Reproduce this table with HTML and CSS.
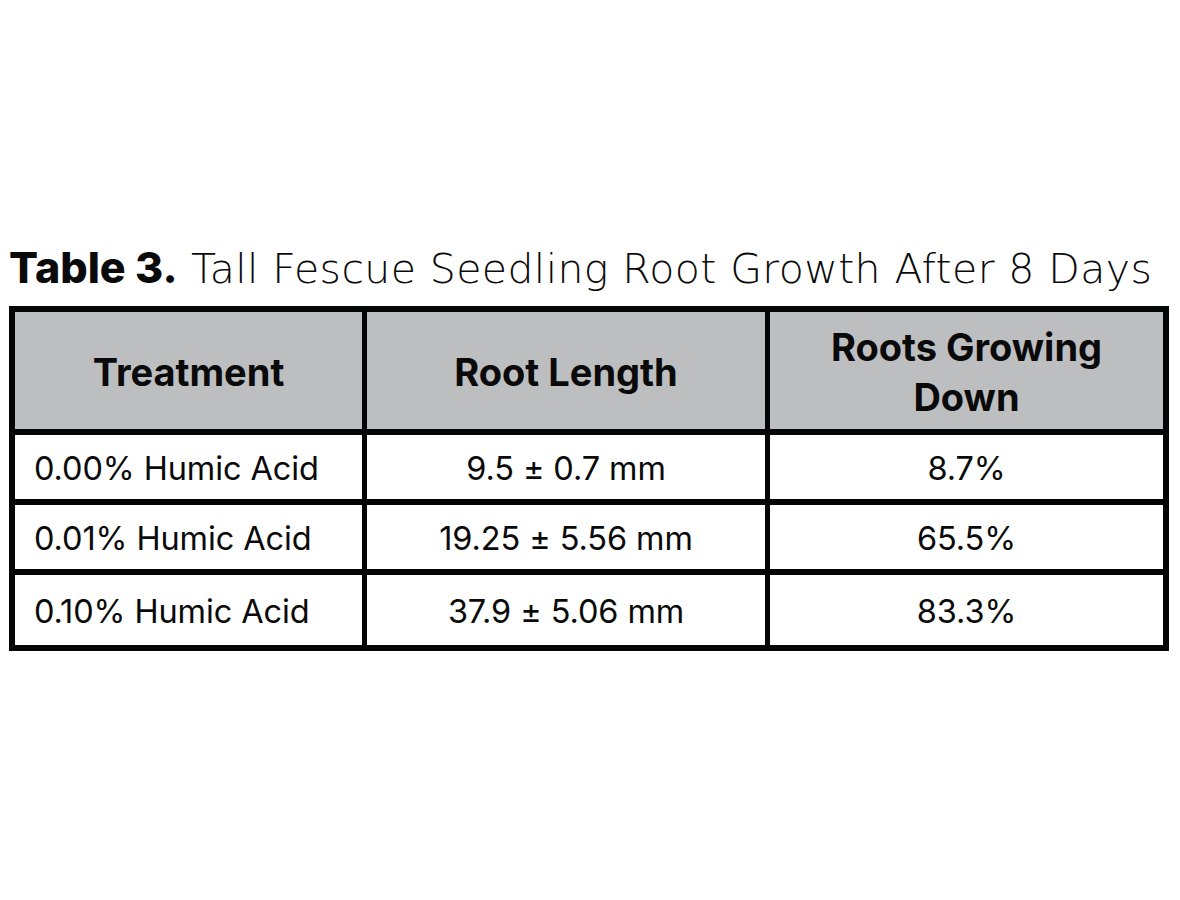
FILE: index.html
```html
<!DOCTYPE html>
<html lang="en">
<head>
<meta charset="utf-8">
<title>Table 3</title>
<link rel="stylesheet" href="styles.css">
</head>
<body>
<main class="page">
  <h1 class="caption"><span class="caption-num">Table 3.</span> Tall Fescue Seedling Root Growth After 8 Days</h1>
  <div class="table">
    <div class="cell head">Treatment</div>
    <div class="cell head">Root Length</div>
    <div class="cell head">Roots Growing<br>Down</div>

    <div class="cell first">0.00% Humic Acid</div>
    <div class="cell">9.5 ± 0.7 mm</div>
    <div class="cell">8.7%</div>

    <div class="cell first">0.01% Humic Acid</div>
    <div class="cell">19.25 ± 5.56 mm</div>
    <div class="cell">65.5%</div>

    <div class="cell first tall">0.10% Humic Acid</div>
    <div class="cell tall">37.9 ± 5.06 mm</div>
    <div class="cell tall">83.3%</div>
  </div>
</main>
</body>
</html>
```

FILE: styles.css
```css
html, body {
  margin: 0;
  padding: 0;
  background: #ffffff;
}

.page {
  padding: 244px 11px 0 9px;
  font-family: "Inter", "Liberation Sans", sans-serif;
  color: #0a0a0a;
}

.caption {
  margin: 0;
  height: 50px;
  font-family: "DejaVu Sans", "Liberation Sans", sans-serif;
  font-size: 41px;
  line-height: 50px;
  font-weight: 200;
  letter-spacing: 0.4px;
  white-space: nowrap;
}

.caption-num {
  font-family: "Inter", "Liberation Sans", sans-serif;
  font-size: 43px;
  line-height: 40px;
  font-weight: 800;
  letter-spacing: 0;
}

.table {
  margin-top: 12px;
  display: grid;
  grid-template-columns: 347px 398px 393px;
  grid-template-rows: 117px 64px 64px 70px;
  column-gap: 5px;
  row-gap: 6px;
  padding: 6px;
  width: 1148px;
  background: #050505;
}

.cell {
  background: #ffffff;
  display: flex;
  align-items: center;
  justify-content: center;
  text-align: center;
  font-size: 32.5px;
  font-weight: 400;
  letter-spacing: -0.1px;
  padding-top: 3px;
  box-sizing: border-box;
}

.cell.first {
  justify-content: flex-start;
  padding-left: 19px;
}

.cell.head {
  background: #bdbec0;
  font-size: 38px;
  font-weight: 700;
  line-height: 50px;
  letter-spacing: 0;
}
```
